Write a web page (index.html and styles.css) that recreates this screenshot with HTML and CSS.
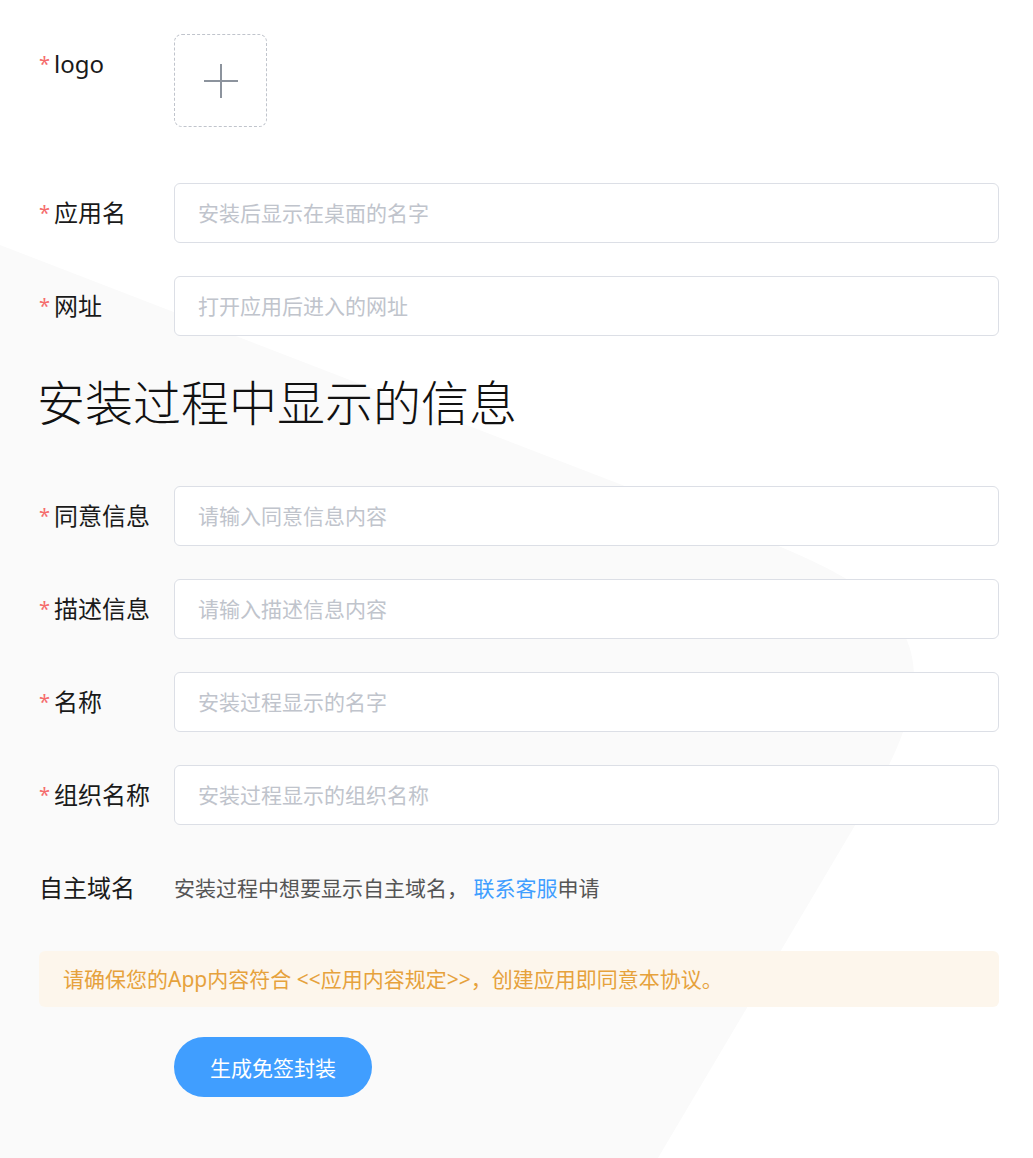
FILE: index.html
```html
<!DOCTYPE html>
<html lang="zh-CN">
<head>
    <meta charset="UTF-8">
    <meta name="viewport" content="width=device-width, initial-scale=1.0">
    <title>免签封装</title>
    <link rel="stylesheet" href="styles.css">
</head>
<body>
    <div class="page">
        <svg class="page-bg" width="1033" height="1158" viewBox="0 0 1033 1158" aria-hidden="true">
            <path d="M0 245 L700 515 C880 584 976 620 870 800 L658 1158 L0 1158 Z" fill="#fafafa"/>
        </svg>

        <form class="app-form" onsubmit="return false">
            <div class="form-item form-item-logo">
                <label class="form-label required">logo</label>
                <div class="form-content">
                    <div class="uploader">
                        <svg width="36" height="36" viewBox="0 0 36 36">
                            <path d="M18 1 V35 M1 18 H35" stroke="#8c939d" stroke-width="2" fill="none"/>
                        </svg>
                    </div>
                </div>
            </div>
            <div class="form-item">
                <label class="form-label required" for="appName">应用名</label>
                <div class="form-content">
                    <input class="form-input" id="appName" type="text" placeholder="安装后显示在桌面的名字">
                </div>
            </div>
            <div class="form-item">
                <label class="form-label required" for="appUrl">网址</label>
                <div class="form-content">
                    <input class="form-input" id="appUrl" type="text" placeholder="打开应用后进入的网址">
                </div>
            </div>

            <h2 class="section-title">安装过程中显示的信息</h2>

            <div class="form-item">
                <label class="form-label required" for="agree">同意信息</label>
                <div class="form-content">
                    <input class="form-input" id="agree" type="text" placeholder="请输入同意信息内容">
                </div>
            </div>
            <div class="form-item">
                <label class="form-label required" for="desc">描述信息</label>
                <div class="form-content">
                    <input class="form-input" id="desc" type="text" placeholder="请输入描述信息内容">
                </div>
            </div>
            <div class="form-item">
                <label class="form-label required" for="name">名称</label>
                <div class="form-content">
                    <input class="form-input" id="name" type="text" placeholder="安装过程显示的名字">
                </div>
            </div>
            <div class="form-item">
                <label class="form-label required" for="org">组织名称</label>
                <div class="form-content">
                    <input class="form-input" id="org" type="text" placeholder="安装过程显示的组织名称">
                </div>
            </div>
            <div class="form-item">
                <label class="form-label">自主域名</label>
                <div class="form-content form-text">
                    安装过程中想要显示自主域名， <a class="link" href="#">联系客服</a>申请
                </div>
            </div>

            <div class="notice">请确保您的App内容符合 &lt;&lt;应用内容规定&gt;&gt;，创建应用即同意本协议。</div>

            <div class="form-actions">
                <button class="btn-primary" type="submit">生成免签封装</button>
            </div>
        </form>
    </div>
</body>
</html>
```

FILE: styles.css
```css
body {
    margin: 0;
    font-family: "Noto Sans", "Noto Sans CJK SC", sans-serif;
    color: #1a1a1a;
    background-color: #fff;
}
.page {
    position: relative;
    min-height: 100vh;
    overflow: hidden;
}
.page-bg {
    position: absolute;
    top: 0;
    left: 0;
    z-index: 0;
}
.app-form {
    position: relative;
    z-index: 1;
    padding: 34px 34px 0 39px;
}
.form-item {
    display: grid;
    grid-template-columns: 135px 1fr;
    margin-bottom: 33px;
}
.form-item-logo {
    margin-bottom: 56px;
}
.form-label {
    font-size: 24px;
    line-height: 60px;
    height: 60px;
    white-space: nowrap;
}
.form-label.required::before {
    content: "*";
    color: #f56c6c;
    font-size: 20px;
    margin-right: 4px;
    vertical-align: 2px;
}
.uploader {
    width: 91px;
    height: 91px;
    border: 1px dashed #c0c4cc;
    border-radius: 8px;
    display: flex;
    align-items: center;
    justify-content: center;
    background-color: #fff;
    cursor: pointer;
}
.form-input {
    display: block;
    width: 100%;
    height: 60px;
    box-sizing: border-box;
    padding: 0 23px;
    border: 1px solid #dcdfe6;
    border-radius: 6px;
    font-family: inherit;
    font-size: 21px;
    color: #606266;
    background-color: #fff;
    outline: none;
}
.form-input::placeholder {
    color: #c0c4cc;
}
.form-input:focus {
    border-color: #409eff;
}
.section-title {
    font-size: 48px;
    font-weight: 300;
    line-height: 68px;
    height: 68px;
    margin: 0 0 49px -2px;
    color: #111;
}
.form-text {
    font-size: 21px;
    line-height: 60px;
    color: #555;
}
.link {
    color: #409eff;
    text-decoration: none;
}
.notice {
    background-color: #fdf6ec;
    color: #e6a23c;
    font-size: 21px;
    line-height: 56px;
    padding: 0 24px;
    border-radius: 6px;
    margin-bottom: 30px;
}
.form-actions {
    padding-left: 135px;
}
.btn-primary {
    width: 198px;
    height: 60px;
    border: none;
    border-radius: 30px;
    background-color: #409eff;
    color: #fff;
    font-family: inherit;
    font-size: 21px;
    cursor: pointer;
}
```
